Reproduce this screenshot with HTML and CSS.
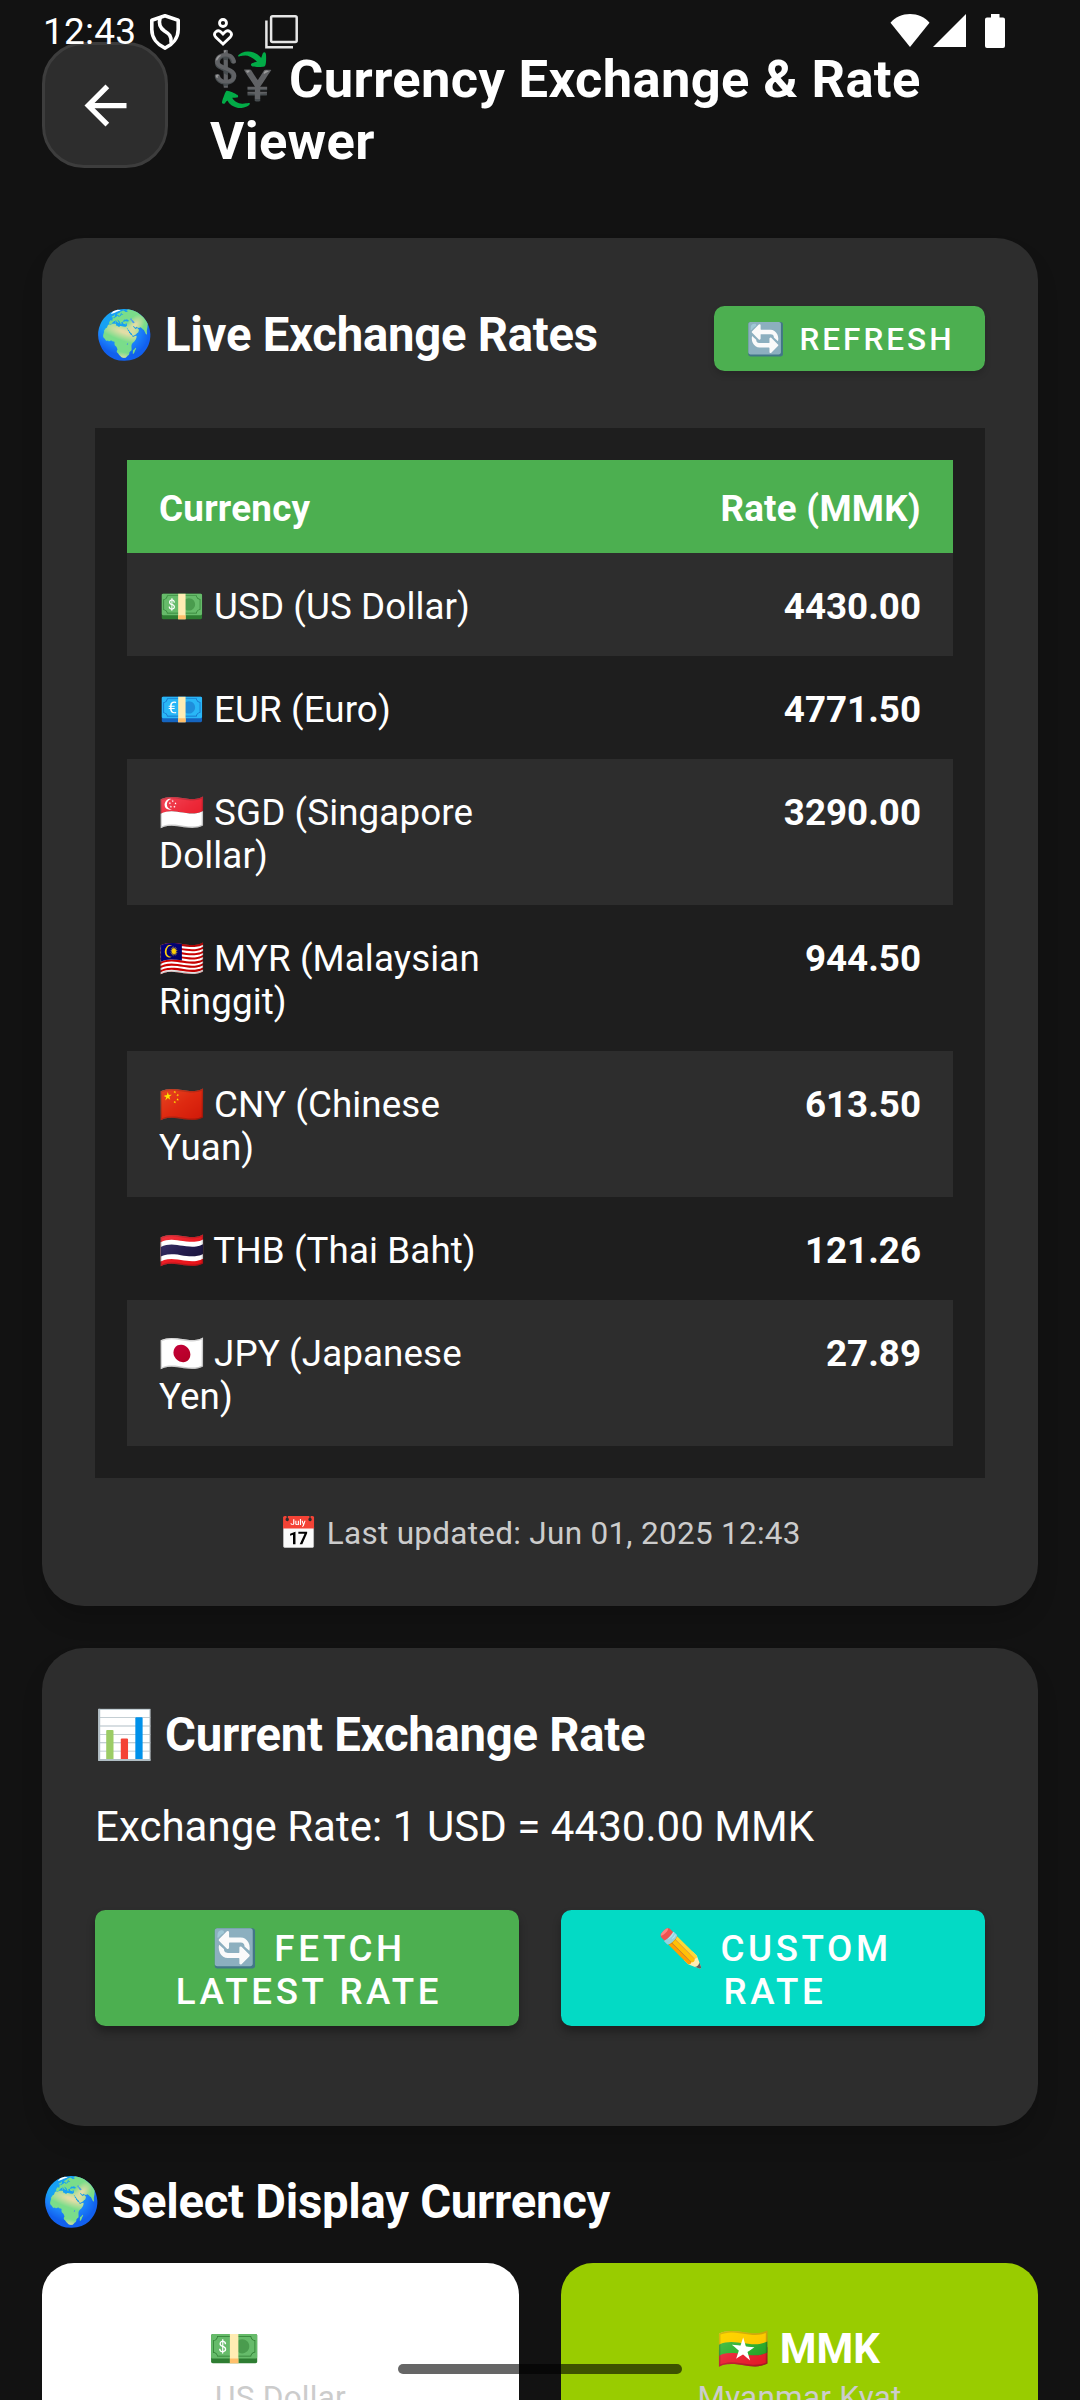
FILE: index.html
```html
<!DOCTYPE html>
<html lang="en">
<head>
<meta charset="utf-8">
<title>Currency Exchange &amp; Rate Viewer</title>
<link rel="stylesheet" href="styles.css">
</head>
<body>
<div class="screen">
  <div class="statusbar">
    <span class="clock">12:43</span>
    <svg class="sb-shield" viewBox="0 0 30 36" fill="none" stroke="#fff" stroke-width="3.6" stroke-linejoin="round" stroke-linecap="round">
      <path d="M15 1.8 L28.2 6.2 V15.5 C28.2 24 22.500 30.800 15 34.200 C7.500 30.800 1.800 24 1.800 15.500 V6.200 Z"/>
      <path d="M10 4.500 C8.500 9.500 9.500 13.500 14.500 17 C19.500 20 21.500 22.500 21 28"/>
    </svg>
    <svg class="sb-heart" viewBox="0 0 20 28" fill="none" stroke="#fff" stroke-width="2.800">
      <circle cx="10" cy="5" r="3.500"/>
      <path d="M10 26 L2.600 19 C-0.600 15 4.800 10.800 8 14 L10 16 L12 14 C15.200 10.800 20.600 15 17.400 19 Z"/>
    </svg>
    <svg class="sb-stack" viewBox="0 0 33 34" fill="none" stroke="#e6e6e6" stroke-width="2.500">
      <rect x="6.100" y="1.300" width="25.600" height="25.800" rx="1.500"/>
      <path d="M1.400 5.500 V32.300 H28"/>
    </svg>
    <svg class="sb-wifi" viewBox="0 0 40 33"><path fill="#fff" d="M20 33 L0.500 8.800 C5 3 12.500 0 20 0 C27.500 0 35 3 39.500 8.800 Z"/></svg>
    <svg class="sb-signal" viewBox="0 0 33 33"><path fill="#fff" d="M33 0 V33 H0 Z"/></svg>
    <svg class="sb-battery" viewBox="0 0 20 34"><path fill="#fff" d="M6 0 H14.500 V3.500 H18 Q20 3.500 20 5.500 V32 Q20 34 18 34 H2 Q0 34 0 32 V5.500 Q0 3.500 2 3.500 H6 Z"/></svg>
  </div>

  <header class="topbar">
    <div class="back">
      <svg viewBox="0 0 24 24"><path fill="#fff" d="M20 11H7.830l5.590-5.590L12 4l-8 8 8 8 1.410-1.410L7.830 13H20v-2z"/></svg>
    </div>
    <h1 class="title">💱 Currency Exchange &amp; Rate Viewer</h1>
  </header>

  <section class="card rates">
    <div class="card-head">
      <h2 class="heading">🌍 Live Exchange Rates</h2>
      <div class="btn btn-small">🔄 REFRESH</div>
    </div>
    <div class="table">
      <div class="row row-head"><span>Currency</span><span class="head-num">Rate (MMK)</span></div>
      <div class="row alt"><span>💵 USD (US Dollar)</span><span class="num">4430.00</span></div>
      <div class="row"><span>💶 EUR (Euro)</span><span class="num">4771.50</span></div>
      <div class="row alt"><span>🇸🇬 SGD (Singapore Dollar)</span><span class="num">3290.00</span></div>
      <div class="row"><span>🇲🇾 MYR (Malaysian Ringgit)</span><span class="num">944.50</span></div>
      <div class="row alt"><span>🇨🇳 CNY (Chinese Yuan)</span><span class="num">613.50</span></div>
      <div class="row"><span>🇹🇭 THB (Thai Baht)</span><span class="num">121.26</span></div>
      <div class="row alt"><span>🇯🇵 JPY (Japanese Yen)</span><span class="num">27.89</span></div>
    </div>
    <p class="updated">📅 Last updated: Jun 01, 2025 12:43</p>
  </section>

  <section class="card current">
    <h2 class="heading">📊 Current Exchange Rate</h2>
    <p class="rate">Exchange Rate: 1 USD = 4430.00 MMK</p>
    <div class="actions">
      <div class="btn">🔄 FETCH<br>LATEST RATE</div>
      <div class="btn teal">✏️ CUSTOM<br>RATE</div>
    </div>
  </section>

  <h2 class="heading section-title">🌍 Select Display Currency</h2>
  <div class="tiles">
    <div class="tile"><strong>💵 USD</strong><span>US Dollar</span></div>
    <div class="tile selected"><strong>🇲🇲 MMK</strong><span>Myanmar Kyat</span></div>
  </div>
  <div class="nav-handle"></div>
</div>
</body>
</html>
```
FILE: styles.css
```css
* { box-sizing: border-box; }
body { margin: 0; background: #121212; color: #fff; font-family: Roboto, "Noto Color Emoji", sans-serif; }
h1, h2, p { margin: 0; }
svg { display: block; }

.screen { position: relative; width: 1080px; height: 2400px; overflow: hidden; padding: 42px 42px 0; }

/* The system status bar floats over the app content. */
.statusbar { position: absolute; left: 0; top: 0; width: 1080px; height: 62px; padding: 14px 75px 0 43px; display: flex; align-items: flex-start; z-index: 2; }
.clock { width: 107px; font-size: 37px; line-height: 43px; margin-top: -4px; letter-spacing: .2px; white-space: nowrap; }
.sb-shield { width: 30px; height: 36px; }
.sb-heart { width: 20px; height: 28px; margin: 4px 0 0 33px; }
.sb-stack { width: 33px; height: 34px; margin: 1px 0 0 32px; }
.sb-wifi { width: 40px; height: 33px; margin-left: auto; }
.sb-signal { width: 33px; height: 33px; margin-left: 3px; }
.sb-battery { width: 20px; height: 34px; margin-left: 19px; }

.topbar { display: flex; align-items: flex-start; gap: 42px; height: 196px; }
.back { width: 126px; height: 126px; flex: none; border: 3px solid #3d3d3d; border-radius: 42px; background: #2d2d2d; display: grid; place-items: center; }
.back svg { width: 63px; height: 63px; }
.title { margin-top: 6px; width: 760px; font-size: 52.5px; line-height: 62px; font-weight: 700; letter-spacing: .35px; }

.card { background: #2d2d2d; border-radius: 42px; padding: 53px; box-shadow: 0 16px 26px -6px rgba(0, 0, 0, .22); }
.rates { height: 1368px; }
.card-head { display: flex; justify-content: space-between; align-items: flex-start; height: 137px; }
.heading { font-size: 47.25px; line-height: 55px; font-weight: 700; letter-spacing: -.26px; white-space: nowrap; }
.card-head .heading { margin-top: 17px; }

.btn { background: #4caf50; border-radius: 10.5px; font-weight: 500; text-align: center; font-size: 36.75px; line-height: 43px; letter-spacing: 3.6px; padding: 17px 0 13px 4px; height: 116px; flex: 1; box-shadow: 0 6px 8px rgba(0, 0, 0, .3); white-space: nowrap; }
.teal { background: #03dac5; }
.btn-small { flex: none; width: 271px; height: 65px; margin-top: 15px; padding: 15px 0 0 2px; font-size: 31.5px; line-height: 37px; letter-spacing: 3px; box-shadow: 0 4px 6px rgba(0, 0, 0, .15); }

.table { background: #1e1e1e; padding: 32px; }
.row { display: grid; grid-template-columns: 1fr 1fr; padding: 32px 0 28px; font-size: 36.75px; line-height: 43px; letter-spacing: .1px; }
.row span { padding: 0 32px; }
.row .num { text-align: right; font-weight: 700; letter-spacing: 0; }
.alt { background: #2d2d2d; }
.row-head { background: #4caf50; font-weight: 700; padding: 27px 0 23px; letter-spacing: .25px; }
.row-head .head-num { text-align: right; }

.updated { margin-top: 37px; text-align: center; font-size: 31.5px; line-height: 37px; letter-spacing: .28px; color: #ccc; }

.current { margin-top: 42px; height: 478px; }
.current .heading { margin-top: 7px; }
.rate { margin-top: 39px; font-size: 42px; line-height: 49px; letter-spacing: .05px; }
.actions { display: flex; gap: 42px; margin-top: 59px; }

.section-title { margin-top: 49px; }
.tiles { display: flex; gap: 42px; margin-top: 33px; }
.tile { flex: 1; height: 200px; border-radius: 32px; background: #fff; padding-top: 61px; display: flex; flex-direction: column; align-items: center; gap: 6px; }
.selected { background: #9c0; }
.tile strong { font-size: 42px; line-height: 49px; font-weight: 700; }
.selected strong { margin-right: 2px; }
.tile span { font-size: 31.5px; line-height: 37px; letter-spacing: .25px; color: #ccc; }

.nav-handle { position: absolute; left: 398px; top: 2364px; width: 284px; height: 10px; border-radius: 5px; background: rgba(0, 0, 0, .6); }
```
